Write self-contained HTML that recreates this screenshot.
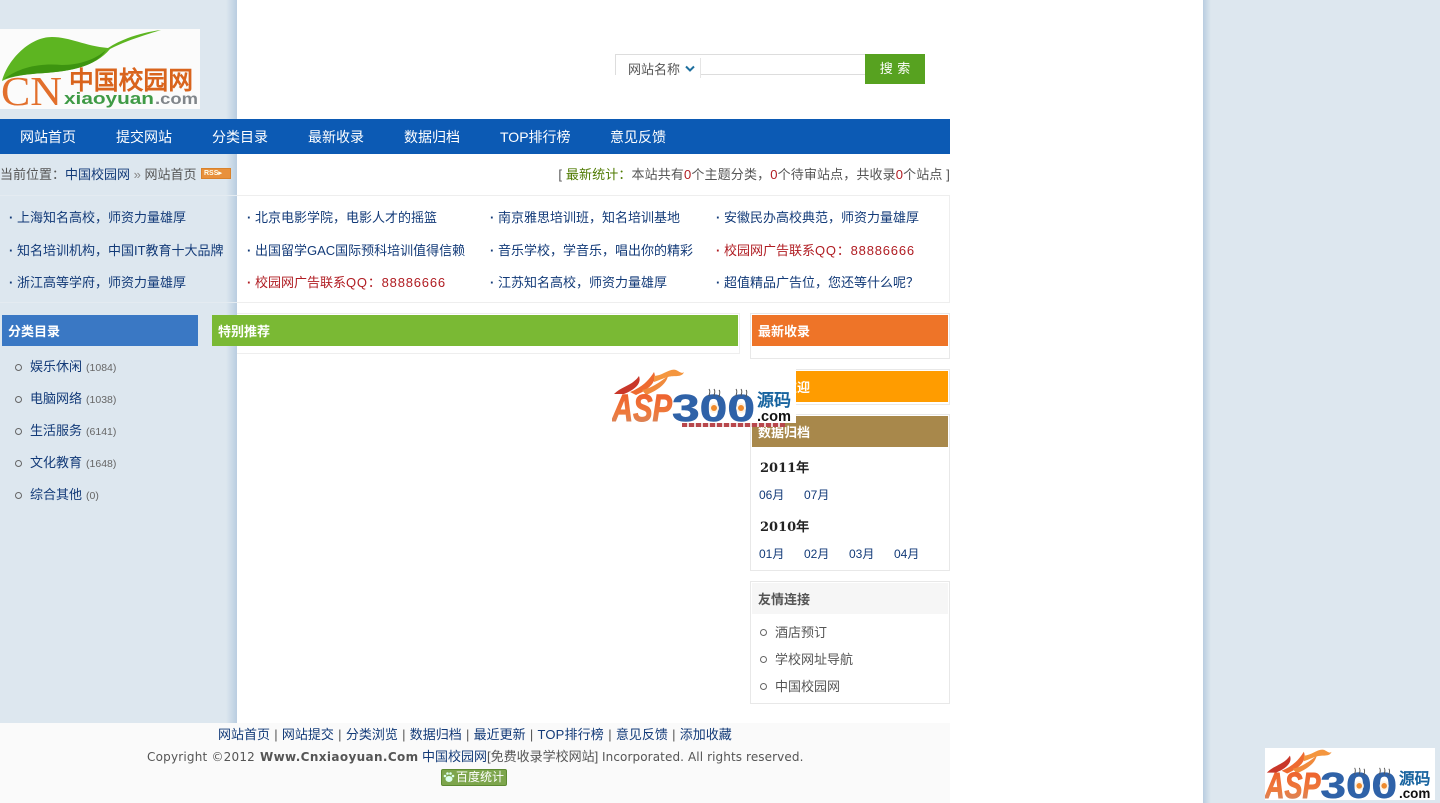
<!DOCTYPE html>
<html lang="zh"><head><meta charset="utf-8"><title>中国校园网</title>
<style>
*{margin:0;padding:0;box-sizing:border-box}
html,body{width:1440px;height:803px;overflow:hidden;background:#dde7ef}
body{position:relative;font:13px/16px "Liberation Sans","WenQuanYi Zen Hei","Noto Sans CJK SC",sans-serif;color:#555}
.a{position:absolute;white-space:nowrap}
.b{color:#123a78}.r{color:#b01c22}
.hd{position:absolute;height:31px;color:#fff;font-weight:bold;font-size:13px;line-height:33px;padding-left:6px}
.box{position:absolute;border:1px solid #e8e8e8;background:#fff}
.dot{position:absolute;width:7px;height:7px;border:1px solid #666;border-radius:50%}
.nav{position:absolute;top:129px;color:#fff;font-size:14px;line-height:16px;white-space:nowrap}
.ad{position:absolute;white-space:nowrap;color:#123a78;font-size:13px;line-height:16px}
.ad:before{content:"·";position:absolute;left:-8px;font-weight:bold}
.ad.r{color:#b01c22}
.q{letter-spacing:.8px}
.c{color:#666;font-size:10.5px;margin-left:4px}
.s{color:#555;padding:0 .65px}
.y{font:bold 13px/16px "DejaVu Serif","WenQuanYi Zen Hei",serif;color:#222}
svg text{font-family:"Liberation Sans","WenQuanYi Zen Hei",sans-serif}
</style></head><body>
<div class="a" style="left:226px;top:0;width:11px;height:803px;background:linear-gradient(90deg,#dde7ef,#b9cde0)"></div>
<div class="a" style="left:237px;top:0;width:966px;height:803px;background:#fff"></div>
<div class="a" style="left:1203px;top:0;width:8px;height:803px;background:linear-gradient(90deg,#b9cde0,#dde7ef)"></div>

<!-- logo -->
<svg class="a" style="left:0;top:29px" width="200" height="80" viewBox="0 0 200 80">
<rect width="200" height="80" fill="#fbfbfb"/>
<path d="M2 52C8 30 30 8 52 8C70 8 85 17 108 19C125 8 145 3 161 1C145 6 125 12 110 20C95 38 70 42 45 44C28 45 12 47 2 52Z" fill="#5db521"/>
<path d="M4 50C20 38 40 34 62 36C80 36 96 30 106 21C96 38 70 42 45 44C28 45 12 47 4 50Z" fill="#3d9410"/>
<text x="1" y="76" font-size="41" style="font-family:'Liberation Serif',serif" fill="#e26f2c" textLength="61" lengthAdjust="spacingAndGlyphs">CN</text>
<text x="69" y="60" font-size="25" font-weight="bold" fill="#d9641d" textLength="124" lengthAdjust="spacingAndGlyphs">中国校园网</text>
<text x="64" y="75" font-size="17" font-weight="bold" fill="#3f9a46" textLength="90" lengthAdjust="spacingAndGlyphs">xiaoyuan</text>
<text x="155" y="75" font-size="16" font-weight="bold" fill="#80858a" textLength="43" lengthAdjust="spacingAndGlyphs">.com</text>
</svg>

<!-- search -->
<div class="a" style="left:615px;top:54px;width:250px;height:21px;border:1px solid #ddd;border-right:0;background:#fff"></div>
<div class="a" style="left:616px;top:58px;width:85px;height:20px;background:#fff;border-right:1px solid #e5e5e5"></div>
<div class="a" style="left:628px;top:62px;font-size:13px;color:#555">网站名称</div>
<svg class="a" style="left:685px;top:65px" width="10" height="8"><path d="M1 1.5L5 5.5L9 1.5" fill="none" stroke="#1e6f9e" stroke-width="2"/></svg>
<div class="a" style="left:865px;top:54px;width:60px;height:30px;background:#57a220;color:#fff;font-size:13px;line-height:29px;text-align:center;word-spacing:1px">搜 索</div>

<!-- nav -->
<div class="a" style="left:0;top:119px;width:950px;height:35px;background:#0c5ab4"></div>
<div class="nav" style="left:20px">网站首页</div>
<div class="nav" style="left:116px">提交网站</div>
<div class="nav" style="left:212px">分类目录</div>
<div class="nav" style="left:308px">最新收录</div>
<div class="nav" style="left:404px">数据归档</div>
<div class="nav" style="left:500px">TOP排行榜</div>
<div class="nav" style="left:610px">意见反馈</div>

<!-- crumb -->
<div class="a" style="left:0;top:167px">当前位置：<span class="b">中国校园网</span> <span style="color:#888">»</span> 网站首页</div>
<div class="a" style="left:201px;top:168px;width:30px;height:11px;background:#e8913c;border:1px solid #d9822b;color:#ffe;font:bold 7px/9px 'Liberation Sans',sans-serif;padding-left:2px">RSS▸</div>
<div class="a" style="right:490px;top:167px;letter-spacing:.13px">[ <span style="color:#4e7a00">最新统计：</span>本站共有<span class="r">0</span>个主题分类，<span class="r">0</span>个待审站点，共收录<span class="r">0</span>个站点 ]</div>

<!-- ads -->
<div class="a" style="left:237px;top:195px;width:713px;height:108px;border:1px solid #eee;border-left:0;background:#fff"></div>
<div class="a" style="left:0;top:195px;width:237px;height:108px;border-top:1px solid #e4ebf1;border-bottom:1px solid #e4ebf1"></div>
<div class="ad" style="left:17px;top:210px">上海知名高校，师资力量雄厚</div>
<div class="ad" style="left:17px;top:243px">知名培训机构，中国IT教育十大品牌</div>
<div class="ad" style="left:17px;top:275px">浙江高等学府，师资力量雄厚</div>
<div class="ad" style="left:255px;top:210px">北京电影学院，电影人才的摇篮</div>
<div class="ad" style="left:255px;top:243px">出国留学GAC国际预科培训值得信赖</div>
<div class="ad r" style="left:255px;top:275px">校园网广告联系<span class="q">QQ：88886666</span></div>
<div class="ad" style="left:498px;top:210px">南京雅思培训班，知名培训基地</div>
<div class="ad" style="left:498px;top:243px">音乐学校，学音乐，唱出你的精彩</div>
<div class="ad" style="left:498px;top:275px">江苏知名高校，师资力量雄厚</div>
<div class="ad" style="left:724px;top:210px">安徽民办高校典范，师资力量雄厚</div>
<div class="ad r" style="left:724px;top:243px">校园网广告联系<span class="q">QQ：88886666</span></div>
<div class="ad" style="left:724px;top:275px">超值精品广告位，您还等什么呢？</div>

<!-- left -->
<div class="hd" style="left:2px;top:315px;width:196px;background:#3a78c4">分类目录</div>
<div class="dot" style="left:15px;top:364px"></div><div class="a b" style="left:30px;top:359px">娱乐休闲<span class="c">(1084)</span></div>
<div class="dot" style="left:15px;top:396px"></div><div class="a b" style="left:30px;top:391px">电脑网络<span class="c">(1038)</span></div>
<div class="dot" style="left:15px;top:428px"></div><div class="a b" style="left:30px;top:423px">生活服务<span class="c">(6141)</span></div>
<div class="dot" style="left:15px;top:460px"></div><div class="a b" style="left:30px;top:455px">文化教育<span class="c">(1648)</span></div>
<div class="dot" style="left:15px;top:492px"></div><div class="a b" style="left:30px;top:487px">综合其他<span class="c">(0)</span></div>

<!-- middle -->
<div class="a" style="left:237px;top:313px;width:503px;height:41px;border:1px solid #eee;border-left:0"></div>
<div class="hd" style="left:212px;top:315px;width:526px;background:#7ab934">特别推荐</div>

<!-- right -->
<div class="box" style="left:750px;top:313px;width:200px;height:46px"></div>
<div class="hd" style="left:752px;top:315px;width:196px;background:#ee7428">最新收录</div>
<div class="box" style="left:750px;top:369px;width:200px;height:36px"></div>
<div class="hd" style="left:752px;top:371px;width:196px;background:#ff9c00">网站欢迎</div>
<div class="box" style="left:750px;top:414px;width:200px;height:157px"></div>
<div class="hd" style="left:752px;top:416px;width:196px;background:#a8884b">数据归档</div>
<div class="a y" style="left:760px;top:461px">2011年</div>
<div class="a b" style="left:759px;top:487px;font-size:12px">06月</div><div class="a b" style="left:804px;top:487px;font-size:12px">07月</div>
<div class="a y" style="left:760px;top:520px">2010年</div>
<div class="a b" style="left:759px;top:546px;font-size:12px">01月</div><div class="a b" style="left:804px;top:546px;font-size:12px">02月</div><div class="a b" style="left:849px;top:546px;font-size:12px">03月</div><div class="a b" style="left:894px;top:546px;font-size:12px">04月</div>
<div class="box" style="left:750px;top:581px;width:200px;height:123px"></div>
<div class="hd" style="left:752px;top:583px;width:196px;background:#f6f6f6;color:#555">友情连接</div>
<div class="dot" style="left:760px;top:629px"></div><div class="a" style="left:775px;top:625px">酒店预订</div>
<div class="dot" style="left:760px;top:656px"></div><div class="a" style="left:775px;top:652px">学校网址导航</div>
<div class="dot" style="left:760px;top:683px"></div><div class="a" style="left:775px;top:679px">中国校园网</div>

<!-- footer -->
<div class="a" style="left:0;top:723px;width:950px;height:80px;background:#fafafa"></div>
<div class="a b" style="left:218px;top:727px">网站首页 <span class="s">|</span> 网站提交 <span class="s">|</span> 分类浏览 <span class="s">|</span> 数据归档 <span class="s">|</span> 最近更新 <span class="s">|</span> <span style="letter-spacing:.15px">TOP排行榜</span> <span class="s">|</span> 意见反馈 <span class="s">|</span> 添加收藏</div>
<div class="a" style="left:147px;top:749px;font-family:'DejaVu Sans','WenQuanYi Zen Hei',sans-serif;font-size:12px;letter-spacing:.2px">Copyright ©2012</div>
<div class="a" style="left:260px;top:749px;font-family:'DejaVu Sans',sans-serif;font-size:12px;font-weight:bold;letter-spacing:.37px">Www.Cnxiaoyuan.Com</div>
<div class="a" style="left:422px;top:749px;font-size:13px"><span class="b">中国校园网</span>[免费收录学校网站]</div>
<div class="a" style="left:602px;top:749px;font-family:'DejaVu Sans',sans-serif;font-size:12px;letter-spacing:.1px">Incorporated. All rights reserved.</div>
<div class="a" style="left:441px;top:769px;width:66px;height:17px;background:#7da54c;border:1px solid #5d8a31;border-radius:2px;color:#fff;font-size:12px;line-height:15px;padding-left:14px">百度统计</div>
<svg class="a" style="left:443px;top:771px" width="12" height="12"><ellipse cx="6" cy="8" rx="3.5" ry="3" fill="#dfe"/><circle cx="2" cy="5" r="1.3" fill="#dfe"/><circle cx="10" cy="5" r="1.3" fill="#dfe"/><circle cx="4.5" cy="2.5" r="1.3" fill="#dfe"/><circle cx="7.5" cy="2.5" r="1.3" fill="#dfe"/></svg>

<!-- watermark center -->
<div class="a" style="left:682px;top:423px;width:103px;height:4px;background:repeating-linear-gradient(90deg,#b8474c 0 5px,#f0d8d8 5px 7px)"></div>
<svg class="a" style="left:612px;top:368px" width="184" height="55" viewBox="0 0 184 55">
<defs><linearGradient id="g" x1="0" y1="0" x2="0" y2="1"><stop offset="0" stop-color="#ee5a2a"/><stop offset=".6" stop-color="#ee7a3c"/><stop offset="1" stop-color="#c98a70"/></linearGradient></defs>
<rect width="184" height="55" fill="#fff"/>
<path d="M2 26C10 18 20 18 27 8C30 16 22 22 12 26Z" fill="#c9372a"/>
<path d="M18 24C28 20 36 14 42 4C46 14 36 22 24 27Z" fill="#ee6a30"/>
<path d="M30 22C40 20 48 14 56 8C54 17 44 23 34 27Z" fill="#f08a3c"/>
<path d="M42 8C50 8 58 0 64 2C68 4 70 6 72 4C70 10 62 7 56 9C52 10 48 12 42 14Z" fill="#f4963f"/>
<text x="0" y="53" font-size="38" font-weight="bold" font-style="italic" fill="url(#g)" stroke="url(#g)" stroke-width="1" textLength="60" lengthAdjust="spacingAndGlyphs">ASP</text>
<text x="60" y="53" font-size="38" font-weight="bold" fill="#2f62a8" stroke="#2f62a8" stroke-width=".6" textLength="83" lengthAdjust="spacingAndGlyphs">300</text>
<circle cx="102" cy="40" r="5" fill="#fdf3e6"/><circle cx="102" cy="40" r="3" fill="#ef8a2c"/>
<circle cx="129" cy="40" r="5" fill="#fdf3e6"/><circle cx="129" cy="40" r="3" fill="#ef8a2c"/>
<path d="M97 21C99 24 97 26 97 28M102 21C104 24 102 26 102 28M107 22C109 24 107 27 107 29M124 21C126 24 124 26 124 28M129 21C131 24 129 26 129 28M134 22C136 24 134 27 134 29" fill="none" stroke="#555" stroke-width="1"/>
<text x="145" y="38" font-size="17" font-weight="bold" fill="#17639f" textLength="34" lengthAdjust="spacingAndGlyphs">源码</text>
<text x="145" y="53" font-size="15" font-weight="bold" fill="#111" textLength="34" lengthAdjust="spacingAndGlyphs">.com</text>
</svg>

<!-- watermark corner -->
<svg class="a" style="left:1265px;top:748px" width="170" height="52" viewBox="0 0 184 55" preserveAspectRatio="none">
<defs><linearGradient id="h" x1="0" y1="0" x2="0" y2="1"><stop offset="0" stop-color="#ee5a2a"/><stop offset=".6" stop-color="#ee7a3c"/><stop offset="1" stop-color="#c98a70"/></linearGradient></defs>
<rect width="184" height="55" fill="#fff"/>
<path d="M2 26C10 18 20 18 27 8C30 16 22 22 12 26Z" fill="#c9372a"/>
<path d="M18 24C28 20 36 14 42 4C46 14 36 22 24 27Z" fill="#ee6a30"/>
<path d="M30 22C40 20 48 14 56 8C54 17 44 23 34 27Z" fill="#f08a3c"/>
<path d="M42 8C50 8 58 0 64 2C68 4 70 6 72 4C70 10 62 7 56 9C52 10 48 12 42 14Z" fill="#f4963f"/>
<text x="0" y="53" font-size="38" font-weight="bold" font-style="italic" fill="url(#h)" stroke="url(#h)" stroke-width="1" textLength="60" lengthAdjust="spacingAndGlyphs">ASP</text>
<text x="60" y="53" font-size="38" font-weight="bold" fill="#2f62a8" stroke="#2f62a8" stroke-width=".6" textLength="83" lengthAdjust="spacingAndGlyphs">300</text>
<circle cx="102" cy="40" r="5" fill="#fdf3e6"/><circle cx="102" cy="40" r="3" fill="#ef8a2c"/>
<circle cx="129" cy="40" r="5" fill="#fdf3e6"/><circle cx="129" cy="40" r="3" fill="#ef8a2c"/>
<path d="M97 21C99 24 97 26 97 28M102 21C104 24 102 26 102 28M107 22C109 24 107 27 107 29M124 21C126 24 124 26 124 28M129 21C131 24 129 26 129 28M134 22C136 24 134 27 134 29" fill="none" stroke="#555" stroke-width="1"/>
<text x="145" y="38" font-size="17" font-weight="bold" fill="#17639f" textLength="34" lengthAdjust="spacingAndGlyphs">源码</text>
<text x="145" y="53" font-size="15" font-weight="bold" fill="#111" textLength="34" lengthAdjust="spacingAndGlyphs">.com</text>
</svg>
</body></html>
